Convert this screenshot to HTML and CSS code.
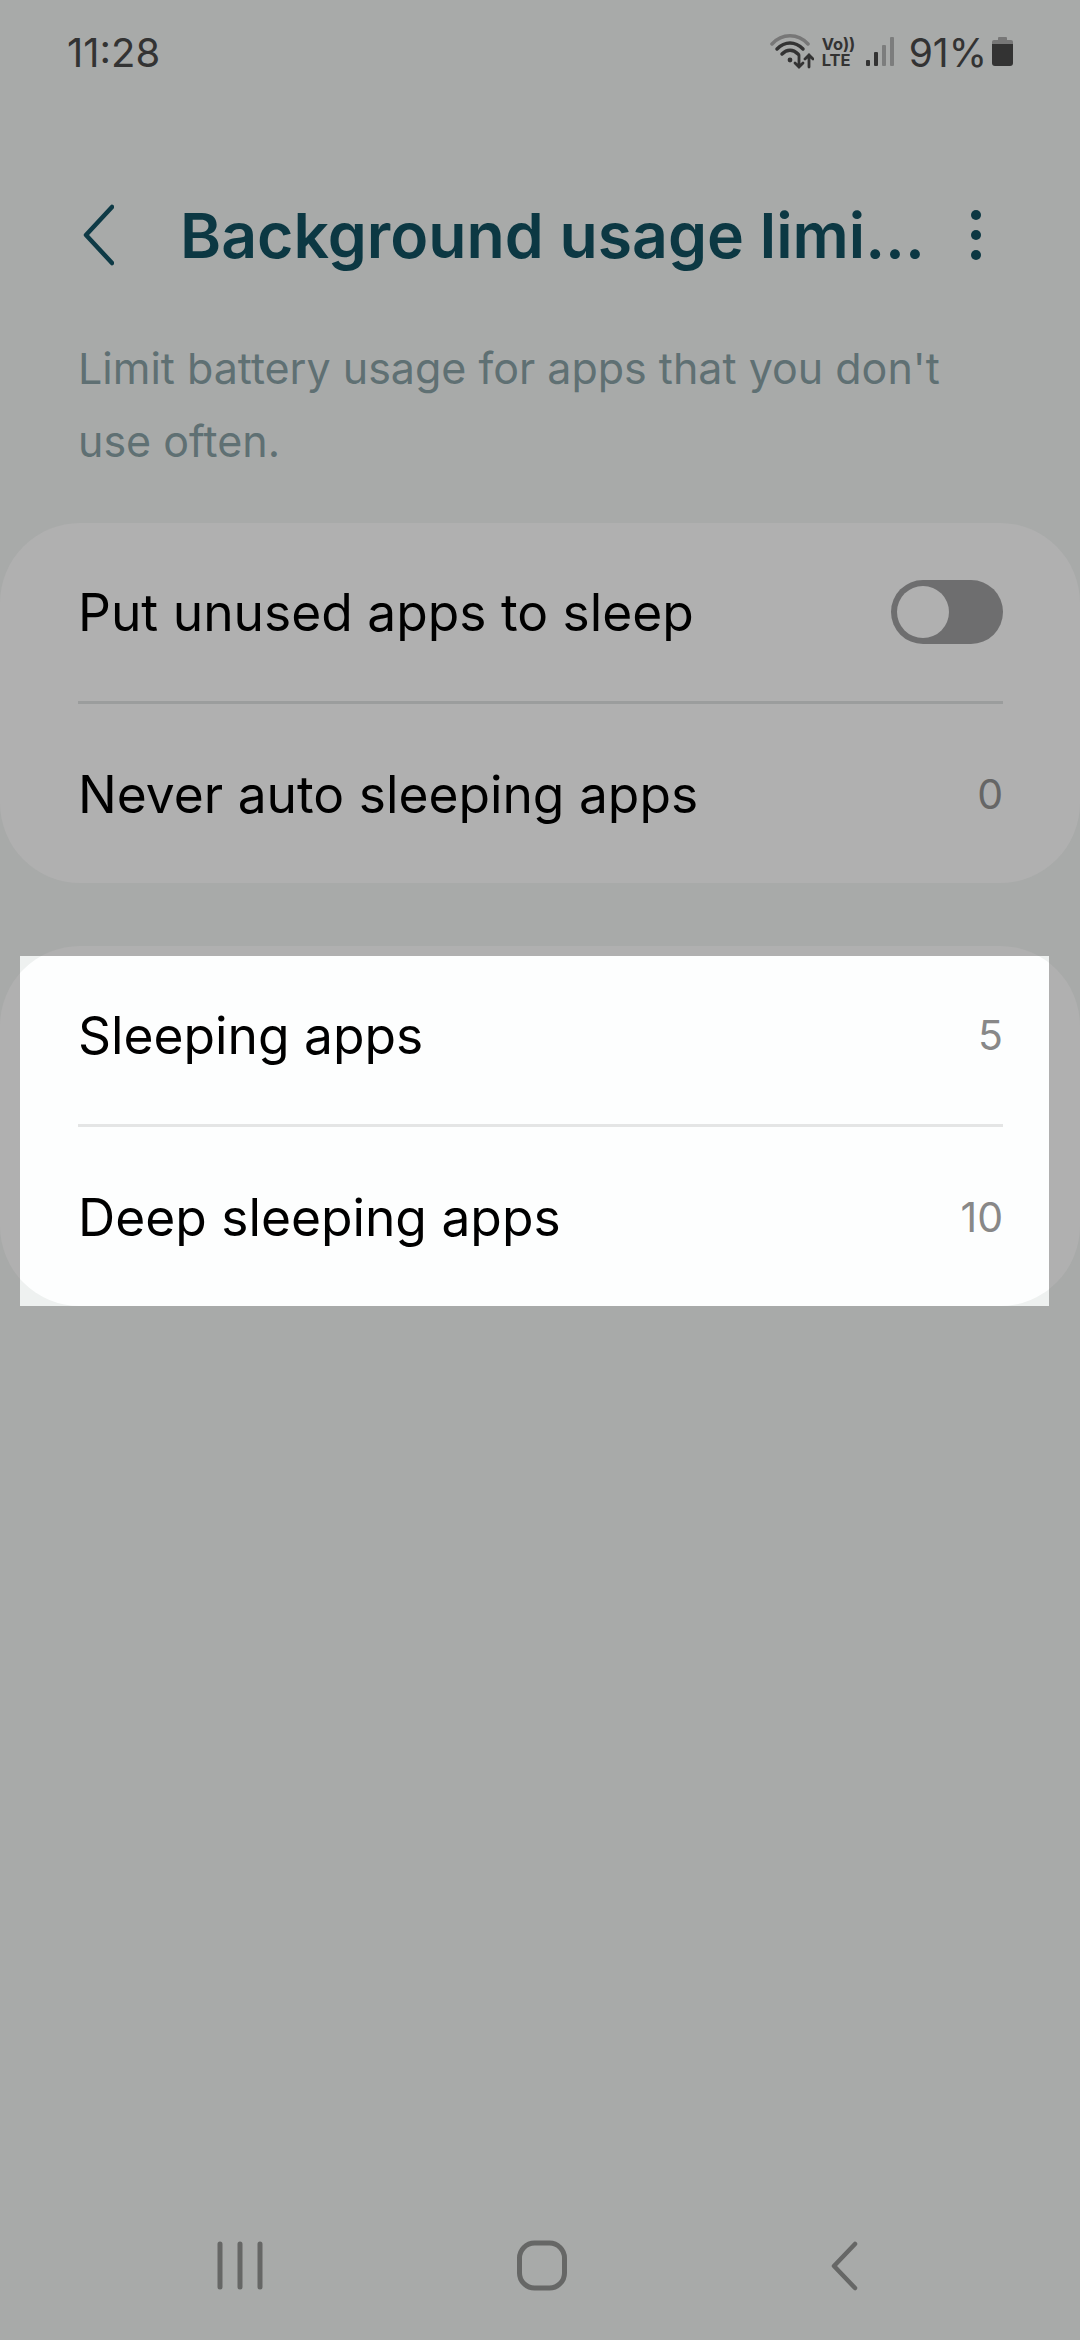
FILE: index.html
```html
<!DOCTYPE html>
<html lang="en">
<head>
    <meta charset="UTF-8">
    <meta name="viewport" content="width=device-width, initial-scale=1.0">
    <title>Background usage limits</title>
    <link rel="stylesheet" href="styles.css">
</head>
<body>
    <div class="page">
        <!-- Status bar -->
        <div class="status-bar">
            <span class="clock">11:28</span>
            <div class="status-icons">
                <svg class="wifi-icon" width="44" height="36" viewBox="0 0 44 36" fill="none" stroke-linecap="round">
                    <path d="M2 10 C12 -1 28 -1 38 10" stroke="#777" stroke-width="3.5"/>
                    <path d="M7 15 C15 7 25 7 33 15" stroke="#333" stroke-width="3.5"/>
                    <path d="M12 20 C17 15 23 15 28 20" stroke="#333" stroke-width="3.5"/>
                    <circle cx="20" cy="26" r="2.4" fill="#333"/>
                    <path d="M29 21 V33 M25 29 L29 33 L33 29" stroke="#333" stroke-width="2.8"/>
                    <path d="M39 33 V21 M35 25 L39 21 L43 25" stroke="#333" stroke-width="2.8"/>
                </svg>
                <div class="volte"><span>Vo))</span><span>LTE</span></div>
                <svg class="signal-icon" width="28" height="30" viewBox="0 0 28 30">
                    <rect x="0" y="23" width="4" height="6" rx="1" fill="#333"/>
                    <rect x="8" y="15" width="4" height="14" rx="1" fill="#333"/>
                    <rect x="16" y="8" width="4" height="21" rx="1" fill="#7c7d7d"/>
                    <rect x="24" y="0" width="4" height="29" rx="1" fill="#7c7d7d"/>
                </svg>
                <span class="battery-text">91%</span>
                <svg class="battery-icon" width="21" height="30" viewBox="0 0 21 30">
                    <rect x="6" y="0" width="9" height="4" rx="1" fill="#777"/>
                    <rect x="0" y="3" width="21" height="6" rx="2" fill="#777"/>
                    <path d="M0 7 H21 V26 Q21 29 18 29 H3 Q0 29 0 26 Z" fill="#333"/>
                </svg>
            </div>
        </div>

        <!-- Title -->
        <div class="app-bar">
            <svg class="back-icon" width="34" height="62" viewBox="0 0 34 62" fill="none">
                <path d="M32 3 L6 31 L32 59" stroke="#0e3a46" stroke-width="4.5" stroke-linecap="round" stroke-linejoin="round"/>
            </svg>
            <h1 class="title">Background usage limi...</h1>
            <div class="more-icon"><i></i><i></i><i></i></div>
        </div>

        <p class="description">Limit battery usage for apps that you don't use often.</p>

        <section class="card">
            <div class="row">
                <span class="row-label">Put unused apps to sleep</span>
                <span class="toggle"><span class="toggle-thumb"></span></span>
            </div>
            <div class="divider"></div>
            <div class="row row-last">
                <span class="row-label">Never auto sleeping apps</span>
                <span class="row-count">0</span>
            </div>
        </section>

        <!-- Highlighted card: the bright box is clipped square, the card keeps its round corners inside -->
        <section class="card card-second">
            <div class="spot">
                <div class="spot-inner">
                    <div class="row">
                        <span class="row-label">Sleeping apps</span>
                        <span class="row-count">5</span>
                    </div>
                    <div class="divider"></div>
                    <div class="row row-last">
                        <span class="row-label">Deep sleeping apps</span>
                        <span class="row-count">10</span>
                    </div>
                </div>
            </div>
        </section>

        <!-- Navigation bar -->
        <nav class="nav-bar">
            <svg width="48" height="52" viewBox="0 0 48 52" fill="none" stroke="#666766" stroke-width="5" stroke-linecap="round">
                <path d="M4 3 V46 M24 3 V46 M44 3 V46"/>
            </svg>
            <svg width="54" height="54" viewBox="0 0 54 54" fill="none" stroke="#666766" stroke-width="5">
                <rect x="4.5" y="3" width="45" height="45" rx="15"/>
            </svg>
            <svg width="34" height="54" viewBox="0 0 34 54" fill="none" stroke="#666766" stroke-width="4.5" stroke-linecap="round" stroke-linejoin="round">
                <path d="M28 4 L7 26 L28 48"/>
            </svg>
        </nav>
    </div>
</body>
</html>
```

FILE: styles.css
```css
body {
    margin: 0;
    padding: 0;
    background-color: #a8aaa9;
    font-family: Inter, "Noto Sans", sans-serif;
}

.page {
    display: flex;
    flex-direction: column;
    width: 1080px;
    height: 2340px;
    overflow: hidden;
}

.status-bar {
    display: flex;
    align-items: center;
    justify-content: space-between;
    height: 52px;
    margin-top: 26px;
    padding: 0 67px;
    color: #333;
}

.clock {
    font-size: 40px;
}

.status-icons {
    display: flex;
    align-items: center;
}

.wifi-icon {
    margin-right: 8px;
}

.volte {
    display: flex;
    flex-direction: column;
    width: 32px;
    margin-right: 12px;
    font-size: 16.5px;
    font-weight: 700;
    line-height: 16px;
}

.signal-icon {
    margin-right: 15px;
}

.battery-text {
    margin-right: 5px;
    font-size: 39px;
}

.app-bar {
    display: flex;
    align-items: center;
    height: 84px;
    margin-top: 115px;
    padding: 0 99px 0 80px;
}

.back-icon {
    margin-right: 66px;
}

.title {
    margin: 0;
    font-size: 62.5px;
    font-weight: 600;
    color: #0c3843;
    white-space: nowrap;
}

.more-icon {
    display: flex;
    flex-direction: column;
    gap: 10px;
    margin-left: auto;
}

.more-icon i {
    display: block;
    width: 10px;
    height: 10px;
    border-radius: 50%;
    background-color: #0c3843;
}

.description {
    margin: 55px 78px 0;
    font-size: 43px;
    line-height: 73px;
    color: #5f7073;
}

.card {
    margin-top: 45px;
    border-radius: 80px;
    background-color: #b0b0b0;
}

.card-second {
    margin-top: 63px;
    padding: 10px 31px 0 20px;
}

.spot {
    overflow: hidden;
    background-color: #eef1f0;
}

.spot-inner {
    margin: -10px -31px 0 -20px;
    border-radius: 80px;
    background-color: #fdfefe;
}

.row {
    display: flex;
    align-items: center;
    justify-content: space-between;
    height: 178px;
    padding: 0 77px 0 78px;
}

.row-last {
    height: 179px;
}

.row-label {
    font-size: 51.5px;
    color: #000;
}

.row-count {
    font-size: 41px;
    color: #666;
}

.spot .row-count {
    color: #888;
}

.divider {
    height: 3px;
    margin: 0 77px 0 78px;
    background-color: #9b9d9d;
}

.spot .divider {
    background-color: #e4e5e5;
}

.toggle {
    display: block;
    box-sizing: border-box;
    width: 112px;
    height: 64px;
    padding: 6px;
    border-radius: 32px;
    background-color: #6e6e6f;
}

.toggle-thumb {
    display: block;
    width: 52px;
    height: 52px;
    border-radius: 50%;
    background-color: #b0b0b0;
}

.nav-bar {
    display: grid;
    grid-template-columns: repeat(3, 302px);
    justify-items: center;
    align-items: center;
    margin-top: auto;
    margin-bottom: 46px;
    padding-left: 89px;
}
```
